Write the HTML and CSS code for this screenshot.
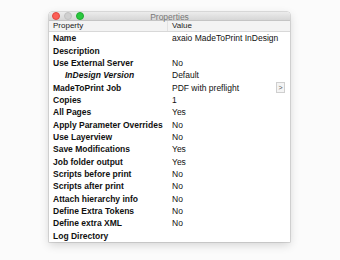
FILE: index.html
```html
<!DOCTYPE html>
<html>
<head>
<meta charset="utf-8">
<link rel="stylesheet" href="styles.css">
</head>
<body>
<div class="window">
  <div class="titlebar">
    <div class="lights">
      <span class="light red"></span>
      <span class="light gray"></span>
      <span class="light green"></span>
    </div>
    <div class="title">Properties</div>
  </div>
  <div class="head">
    <div class="hcell prop">Property</div>
    <div class="hcell val">Value</div>
  </div>
  <div class="rows">
    <div class="row"><div class="k">Name</div><div class="v">axaio MadeToPrint InDesign</div></div>
    <div class="row"><div class="k">Description</div><div class="v"></div></div>
    <div class="row"><div class="k">Use External Server</div><div class="v">No</div></div>
    <div class="row"><div class="k sub">InDesign Version</div><div class="v">Default</div></div>
    <div class="row"><div class="k">MadeToPrint Job</div><div class="v">PDF with preflight<span class="btn">&gt;</span></div></div>
    <div class="row"><div class="k">Copies</div><div class="v">1</div></div>
    <div class="row"><div class="k">All Pages</div><div class="v">Yes</div></div>
    <div class="row"><div class="k">Apply Parameter Overrides</div><div class="v">No</div></div>
    <div class="row"><div class="k">Use Layerview</div><div class="v">No</div></div>
    <div class="row"><div class="k">Save Modifications</div><div class="v">Yes</div></div>
    <div class="row"><div class="k">Job folder output</div><div class="v">Yes</div></div>
    <div class="row"><div class="k">Scripts before print</div><div class="v">No</div></div>
    <div class="row"><div class="k">Scripts after print</div><div class="v">No</div></div>
    <div class="row"><div class="k">Attach hierarchy info</div><div class="v">No</div></div>
    <div class="row"><div class="k">Define Extra Tokens</div><div class="v">No</div></div>
    <div class="row"><div class="k">Define extra XML</div><div class="v">No</div></div>
    <div class="row"><div class="k">Log Directory</div><div class="v"></div></div>
  </div>
</div>
</body>
</html>
```

FILE: styles.css
```css
html, body {
  margin: 0;
  padding: 0;
  background: #fbfbfb;
  width: 340px;
  height: 260px;
  overflow: hidden;
}
body {
  padding: 12px 0 0 49px;
  box-sizing: border-box;
  font-family: "Liberation Sans", Arial, sans-serif;
  color: #111;
}
.window {
  width: 241px;
  height: 230px;
  background: #fff;
  box-shadow: 0 3px 10px rgba(0,0,0,0.16), 0 0 0 0.5px rgba(0,0,0,0.22);
  border-radius: 3px 3px 0 0;
  display: flex;
  flex-direction: column;
  overflow: hidden;
}
.titlebar {
  height: 11px;
  background: linear-gradient(#ececec, #d6d6d6);
  border-bottom: 1px solid #c4c4c4;
  display: flex;
  align-items: center;
  position: relative;
}
.lights {
  display: flex;
  gap: 4px;
  padding-left: 3px;
}
.light {
  width: 8px;
  height: 8px;
  border-radius: 50%;
  display: block;
  box-sizing: border-box;
}
.red { background: #fc5f57; border: 0.5px solid #e04640; }
.gray { background: #d0d0d0; border: 0.5px solid #c0c0c0; }
.green { background: #2bc840; border: 0.5px solid #1faa2f; }
.title {
  position: absolute;
  left: 0;
  right: 0;
  text-align: center;
  font-size: 8.5px;
  color: #777;
  top: 0;
  line-height: 11px;
}
.head {
  display: flex;
  height: 10px;
  background: #f3f3f3;
  border-bottom: 1px solid #d8d8d8;
  font-size: 8px;
  line-height: 10px;
  color: #222;
}
.hcell.prop {
  width: 114px;
  padding-left: 4px;
  border-right: 1px solid #e2e2e2;
}
.hcell.val {
  padding-left: 4px;
}
.rows {
  display: flex;
  flex-direction: column;
}
.row {
  display: flex;
  height: 12.35px;
  line-height: 12.35px;
  font-size: 8.5px;
}
.k {
  width: 115px;
  padding-left: 4px;
  font-weight: bold;
  white-space: nowrap;
}
.k.sub {
  padding-left: 16px;
  width: 103px;
  font-style: italic;
}
.v {
  padding-left: 4px;
  white-space: nowrap;
  display: flex;
  align-items: center;
  flex: 1;
}
.btn {
  margin-left: auto;
  margin-right: 5px;
  width: 7px;
  height: 9px;
  border: 1px solid #cfcfcf;
  background: #f4f4f4;
  font-size: 7px;
  line-height: 9px;
  text-align: center;
  color: #555;
}
```
